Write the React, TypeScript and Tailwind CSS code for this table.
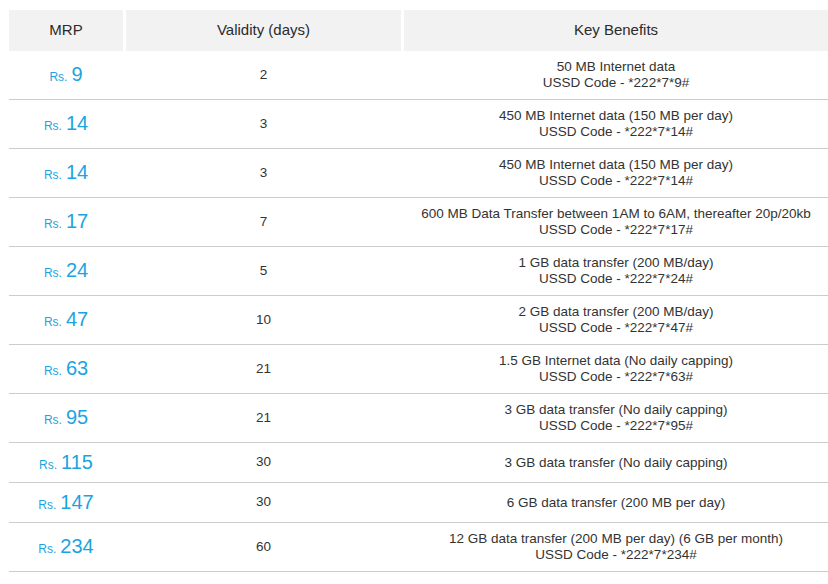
const plans = [
  { price: "9", days: "2", lines: ["50 MB Internet data", "USSD Code - *222*7*9#"] },
  { price: "14", days: "3", lines: ["450 MB Internet data (150 MB per day)", "USSD Code - *222*7*14#"] },
  { price: "14", days: "3", lines: ["450 MB Internet data (150 MB per day)", "USSD Code - *222*7*14#"] },
  { price: "17", days: "7", lines: ["600 MB Data Transfer between 1AM to 6AM, thereafter 20p/20kb", "USSD Code - *222*7*17#"] },
  { price: "24", days: "5", lines: ["1 GB data transfer (200 MB/day)", "USSD Code - *222*7*24#"] },
  { price: "47", days: "10", lines: ["2 GB data transfer (200 MB/day)", "USSD Code - *222*7*47#"] },
  { price: "63", days: "21", lines: ["1.5 GB Internet data (No daily capping)", "USSD Code - *222*7*63#"] },
  { price: "95", days: "21", lines: ["3 GB data transfer (No daily capping)", "USSD Code - *222*7*95#"] },
  { price: "115", days: "30", lines: ["3 GB data transfer (No daily capping)"] },
  { price: "147", days: "30", lines: ["6 GB data transfer (200 MB per day)"] },
  { price: "234", days: "60", lines: ["12 GB data transfer (200 MB per day) (6 GB per month)", "USSD Code - *222*7*234#"] },
]

export default function App() {
  return (
    <div className="w-[828px] h-[584px] bg-white pl-[9px] pt-[10px] overflow-hidden font-['Liberation_Sans',Arial,sans-serif] text-[#333]">
      {/* Header */}
      <div className="grid grid-cols-[114px_275px_1fr] gap-x-[3px] h-[41px] text-[15px] text-[#2b2b2b]">
        <div className="bg-[#f2f2f2] flex items-center justify-center">MRP</div>
        <div className="bg-[#f2f2f2] flex items-center justify-center">Validity (days)</div>
        <div className="bg-[#f2f2f2] flex items-center justify-center">Key Benefits</div>
      </div>

      {/* Rows */}
      {plans.map((p, i) => (
        <div
          key={i}
          className={`grid grid-cols-[114px_275px_1fr] gap-x-[3px] border-b border-[#cccccc] ${p.lines.length > 1 ? "h-[49px]" : "h-[40px]"}`}
        >
          <div className="flex items-baseline justify-center self-center text-[#1ba4e0]">
            <span className="text-[12px] mr-[4px]">Rs.</span>
            <span className="text-[20px] leading-none">{p.price}</span>
          </div>
          <div className="flex items-center justify-center text-[13.5px]">{p.days}</div>
          <div className="flex flex-col items-center justify-center text-[13.5px] leading-[16px] text-center">
            {p.lines.map((l, j) => (
              <span key={j}>{l}</span>
            ))}
          </div>
        </div>
      ))}
    </div>
  )
}
